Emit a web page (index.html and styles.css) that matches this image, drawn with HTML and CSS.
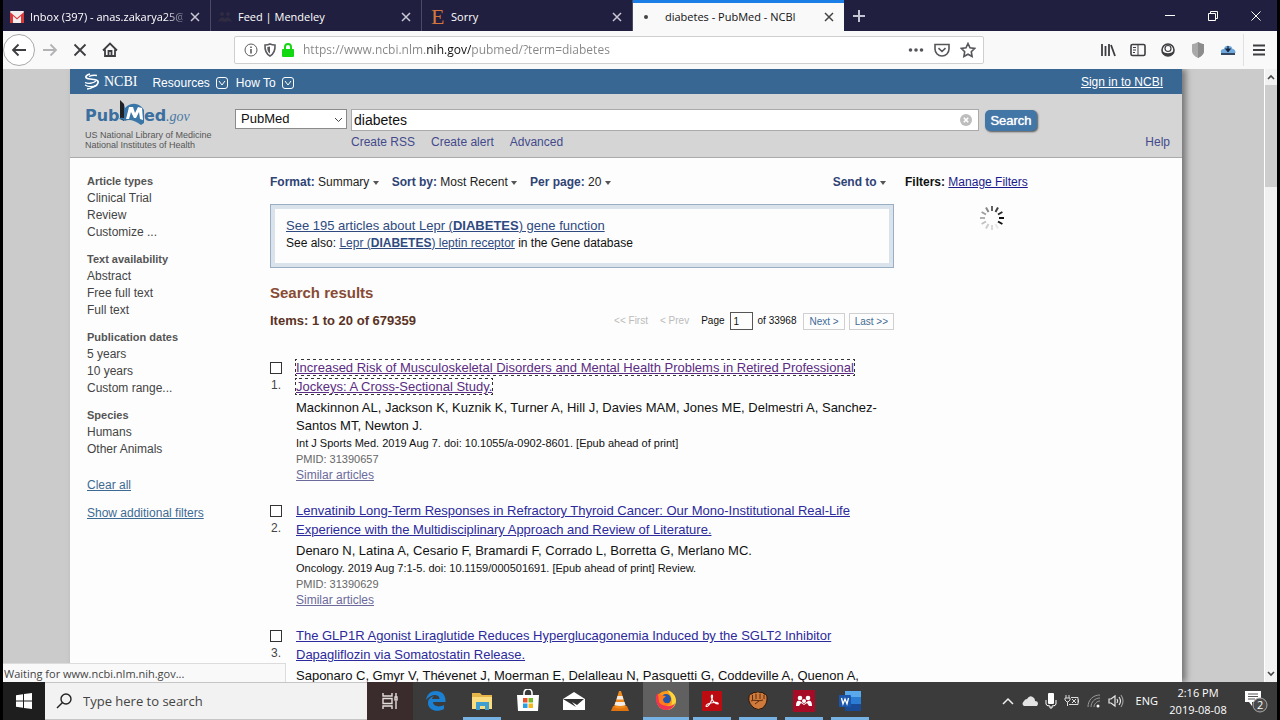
FILE: index.html
```html
<!DOCTYPE html>
<html lang="en">
<head>
<meta charset="utf-8">
<title>diabetes - PubMed - NCBI</title>
<link rel="stylesheet" href="styles.css">
</head>
<body>
<div class="desktop">
  <header class="tabs">
    <div class="tab">
      <svg class="tab-icon" width="14" height="12" viewBox="0 0 14 12"><rect width="14" height="12" rx="1" fill="#f3eeee"/><path d="M0 12V1l7 6 7-6v11h-3V5L7 8.500 3 5v7z" fill="#d8393b"/></svg>
      <span class="tab-title faded">Inbox (397) - anas.zakarya25@g</span>
      <button class="tab-close" aria-label="Close tab"><svg width="10" height="10" viewBox="0 0 10 10"><path d="M1 1l8 8M9 1L1 9"/></svg></button>
    </div>
    <div class="tab">
      <svg class="tab-icon" width="14" height="12" viewBox="0 0 14 12" fill="#2f2c42"><circle cx="4" cy="3" r="2"/><circle cx="10" cy="3" r="2"/><path d="M0 11c2-5 5-6 7-3 2-3 5-2 7 3l-3-1-4 1-4-1z"/></svg>
      <span class="tab-title">Feed | Mendeley</span>
      <button class="tab-close" aria-label="Close tab"><svg width="10" height="10" viewBox="0 0 10 10"><path d="M1 1l8 8M9 1L1 9"/></svg></button>
    </div>
    <div class="tab">
      <span class="etsy">E</span>
      <span class="tab-title">Sorry</span>
      <button class="tab-close" aria-label="Close tab"><svg width="10" height="10" viewBox="0 0 10 10"><path d="M1 1l8 8M9 1L1 9"/></svg></button>
    </div>
    <div class="tab active">
      <span class="loading-dot"></span>
      <span class="tab-title">diabetes - PubMed - NCBI</span>
      <button class="tab-close" aria-label="Close tab"><svg width="10" height="10" viewBox="0 0 10 10"><path d="M1 1l8 8M9 1L1 9"/></svg></button>
    </div>
    <button class="new-tab" aria-label="New tab"><svg width="14" height="14" viewBox="0 0 14 14"><path d="M7 1v12M1 7h12" stroke="#c4c3d2" stroke-width="2"/></svg></button>
    <div class="window-buttons">
      <button aria-label="Minimize"><svg width="12" height="12" viewBox="0 0 12 12"><path d="M1 5.500h10"/></svg></button>
      <button aria-label="Restore"><svg width="12" height="12" viewBox="0 0 12 12"><path d="M1.500 3.500h7v7h-7zM3.500 3.500v-2h7v7h-2"/></svg></button>
      <button aria-label="Close"><svg width="12" height="12" viewBox="0 0 12 12"><path d="M1.500 1.500l9 9M10.500 1.500l-9 9"/></svg></button>
    </div>
  </header>

  <nav class="toolbar">
    <button class="tool back" aria-label="Back"><svg width="16" height="16" viewBox="0 0 16 16"><path d="M15 8H2M7.500 2.500L2 8l5.500 5.500"/></svg></button>
    <button class="tool dim" aria-label="Forward"><svg width="16" height="16" viewBox="0 0 16 16"><path d="M1 8h13M8.500 2.500L14 8l-5.500 5.500"/></svg></button>
    <button class="tool" aria-label="Stop"><svg width="14" height="14" viewBox="0 0 14 14"><path d="M1.500 1.500l11 11M12.500 1.500l-11 11"/></svg></button>
    <button class="tool" aria-label="Home"><svg width="16" height="16" viewBox="0 0 16 16"><path d="M1 8.500l7-7 7 7M3 7.500V14h10V7.500M6.500 14V9h3v5"/></svg></button>
    <div class="urlbar">
      <svg width="14" height="14" viewBox="0 0 14 14" fill="none" stroke="#5c5c60"><circle cx="7" cy="7" r="6"/><path d="M7 6v4.500M7 3.500V5" stroke-width="1.600"/></svg>
      <svg width="14" height="14" viewBox="0 0 14 14" fill="none" stroke="#5c5c60" stroke-width="1.600"><path d="M2 2q3 0 5-1 2 1 5 1 .5 8-5 11Q1.500 10 2 2z"/><path d="M7 3.500v7C4.500 9 4.300 7 4.300 4z" fill="#5c5c60" stroke="none"/></svg>
      <svg width="12" height="14" viewBox="0 0 12 14"><path d="M3 7V4a3 3 0 0 1 6 0v3" fill="none" stroke="#16d616" stroke-width="2"/><rect y="6" width="12" height="8" rx="1" fill="#12d812"/></svg>
      <input class="url" type="text" aria-label="Address" value="https://www.ncbi.nlm.nih.gov/pubmed/?term=diabetes">
      <button aria-label="Page actions"><svg width="16" height="16" viewBox="0 0 16 16" fill="#55555a"><circle cx="2.500" cy="8" r="1.800"/><circle cx="8" cy="8" r="1.800"/><circle cx="13.500" cy="8" r="1.800"/></svg></button>
      <button aria-label="Save to Pocket"><svg width="16" height="16" viewBox="0 0 16 16" fill="none" stroke="#55555a" stroke-width="1.600"><path d="M1 2.500h14V7a7 7 0 0 1-14 0zM4.500 6.200L8 9.500l3.500-3.300"/></svg></button>
      <button aria-label="Bookmark"><svg width="16" height="16" viewBox="0 0 16 16" fill="none" stroke="#55555a" stroke-width="1.600"><path d="M8 1.500l2 4.300 4.700.6-3.400 3.300.8 4.800L8 12.200l-4.100 2.300.8-4.800L1.300 6.400 6 5.800z"/></svg></button>
    </div>
    <div class="extensions">
      <button class="tool" aria-label="Library"><svg width="16" height="16" viewBox="0 0 16 16"><path d="M2 2v12M5.500 4v10M9 2v12M11 3l4 11"/></svg></button>
      <button class="tool" aria-label="Sidebars"><svg width="16" height="16" viewBox="0 0 16 16"><rect x="1" y="2.500" width="14" height="11" rx="1.500" stroke-width="1.600"/><path d="M8 3v10M3 5.500h3M3 8h3M3 10.500h2" stroke-width="1"/></svg></button>
      <button class="tool" aria-label="Account"><svg width="16" height="16" viewBox="0 0 16 16"><circle cx="8" cy="8" r="6" stroke-width="1.600"/><path d="M2.500 9c0 3.500 2 5 5.500 5s5.500-1.500 5.500-5c-2.500 3-8.500 3-11 0z" fill="#3e3e42" stroke="none"/><circle cx="8" cy="6.500" r="3" fill="#f9f9fa" stroke-width="1.200"/></svg></button>
      <button class="tool" aria-label="Shield extension"><svg width="16" height="16" viewBox="0 0 16 16"><path d="M8 0q3 2 6 2.300V9q0 4-6 7-6-3-6-7V2.300Q5 2 8 0z" fill="#a9a9a9" stroke="none"/><path d="M8 0q3 2 6 2.300V9q0 4-6 7z" fill="#8c8c8c" stroke="none"/></svg></button>
      <button class="tool" aria-label="Download extension"><svg width="16" height="16" viewBox="0 0 16 16"><path d="M1 11q-1-4 3-4 1-4 5-3 3 0 3.500 3 3 0 3 4z" fill="#6ea8dc" stroke="none"/><path d="M1 12h14" stroke="#1d3450"/><path d="M8 4v4M6 7h4L8 9.500z" stroke="#14233a" stroke-width="1.200" fill="#14233a"/></svg></button>
      <span class="tool-separator"></span>
      <button class="tool" aria-label="Menu"><svg width="14" height="14" viewBox="0 0 14 14"><path d="M1 2.500h12M1 7h12M1 11.500h12"/></svg></button>
    </div>
  </nav>

  <div class="viewport">
    <main class="page">
      <div class="ncbi-bar">
        <a class="ncbi-brand" href="#"><svg width="16" height="17" viewBox="0 0 16 17" fill="none" stroke="#fff" stroke-width="1.700"><path d="M6 1C0 3 1 5.500 6 6s9 1 8 4-3 3-5 4"/><path d="M13 2.500C10 2 7 2.500 5 3.500M1 9.500c3 1.500 8 1 11-1.500M1 12c3 2 8 2 12 0M3 16c3 0 5-1 7-2.500" stroke-width="1.300"/></svg><span>NCBI</span></a>
        <a class="menu" href="#">Resources <svg width="12" height="12" viewBox="0 0 12 12"><rect x=".5" y=".5" width="11" height="11" rx="2.500"/><path d="M3 4l3 4 3-4"/></svg></a>
        <a class="menu" href="#">How To <svg width="12" height="12" viewBox="0 0 12 12"><rect x=".5" y=".5" width="11" height="11" rx="2.500"/><path d="M3 4l3 4 3-4"/></svg></a>
        <a class="sign-in" href="#">Sign in to NCBI</a>
      </div>

      <div class="search-header">
        <div class="brand">
          <svg class="logo" width="112" height="28" viewBox="0 0 112 28">
            <text class="logo-word" x="0" y="21">Pub</text>
            <path d="M35 0l4 4v17l-4-2z" fill="#202326"/>
            <path d="M39 4v14q-4-1-5 1 4 0 6 2 6-3 16 4l3-2V10q-3-5-8-6-6-1-11 4z" fill="#3a77a8"/>
            <path d="M41 19l3-12h4l2 6 3-6 4 1 1 12-3-1-1-7-3 6h-2l-3-6-2 7z" fill="#fff"/>
            <text class="logo-word" x="59" y="21">ed</text>
            <text class="logo-gov" x="81" y="21">.gov</text>
          </svg>
          <span>US National Library of Medicine</span>
          <span>National Institutes of Health</span>
        </div>
        <form class="search-form">
          <div class="search-row">
            <div class="database">
              <select aria-label="Database"><option>PubMed</option></select>
              <svg width="9" height="6" viewBox="0 0 9 6"><path d="M1 1l3.500 3.500L8 1" fill="none" stroke="#444"/></svg>
            </div>
            <div class="term">
              <input type="text" aria-label="Search term" value="diabetes">
              <button type="button" aria-label="Clear"><svg width="12" height="12" viewBox="0 0 12 12"><circle cx="6" cy="6" r="6" fill="#bdbdbd"/><path d="M3.800 3.800l4.400 4.400M8.200 3.800L3.800 8.200" stroke="#fff" stroke-width="1.600"/></svg></button>
            </div>
            <button class="search-button" type="button">Search</button>
          </div>
          <div class="search-links">
            <a href="#">Create RSS</a><a href="#">Create alert</a><a href="#">Advanced</a><a class="help" href="#">Help</a>
          </div>
        </form>
      </div>

      <div class="content">
        <aside class="filters">
          <section><h3>Article types</h3><a href="#">Clinical Trial</a><a href="#">Review</a><a href="#">Customize ...</a></section>
          <section><h3>Text availability</h3><a href="#">Abstract</a><a href="#">Free full text</a><a href="#">Full text</a></section>
          <section><h3>Publication dates</h3><a href="#">5 years</a><a href="#">10 years</a><a href="#">Custom range...</a></section>
          <section><h3>Species</h3><a href="#">Humans</a><a href="#">Other Animals</a></section>
          <a class="filter-action" href="#">Clear all</a>
          <a class="filter-action" href="#">Show additional filters</a>
        </aside>

        <div class="results">
          <div class="display-bar">
            <a href="#"><b>Format:</b> Summary <i class="caret"></i></a>
            <a href="#"><b>Sort by:</b> Most Recent <i class="caret"></i></a>
            <a href="#"><b>Per page:</b> 20 <i class="caret"></i></a>
            <a class="send" href="#"><b>Send to</b> <i class="caret"></i></a>
          </div>
          <div class="gene-box">
            <p class="gene-main"><a href="#">See 195 articles about Lepr (<b>DIABETES</b>) gene function</a></p>
            <p>See also: <a href="#">Lepr (<b>DIABETES</b>) leptin receptor</a> in the Gene database</p>
          </div>
          <h2>Search results</h2>
          <div class="count-row">
            <h3>Items: 1 to 20 of 679359</h3>
            <div class="pager">
              <span class="off">&lt;&lt; First</span>
              <span class="off">&lt; Prev</span>
              <label for="page">Page</label>
              <input id="page" type="text" value="1">
              <span class="total">of 33968</span>
              <a href="#">Next &gt;</a>
              <a href="#">Last &gt;&gt;</a>
            </div>
          </div>

          <article class="result">
            <div class="pick"><input id="r1" type="checkbox"><label for="r1">1.</label></div>
            <div class="citation">
              <p class="title"><a class="focused" href="#">Increased Risk of Musculoskeletal Disorders and Mental Health Problems in Retired Professional Jockeys: A Cross-Sectional Study.</a></p>
              <p class="authors">Mackinnon AL, Jackson K, Kuznik K, Turner A, Hill J, Davies MAM, Jones ME, Delmestri A, Sanchez-Santos MT, Newton J.</p>
              <p class="source">Int J Sports Med. 2019 Aug 7. doi: 10.1055/a-0902-8601. [Epub ahead of print]</p>
              <p class="pmid">PMID: 31390657</p>
              <p class="similar"><a href="#">Similar articles</a></p>
            </div>
          </article>
          <article class="result">
            <div class="pick"><input id="r2" type="checkbox"><label for="r2">2.</label></div>
            <div class="citation">
              <p class="title"><a href="#">Lenvatinib Long-Term Responses in Refractory Thyroid Cancer: Our Mono-Institutional Real-Life Experience with the Multidisciplinary Approach and Review of Literature.</a></p>
              <p class="authors">Denaro N, Latina A, Cesario F, Bramardi F, Corrado L, Borretta G, Merlano MC.</p>
              <p class="source">Oncology. 2019 Aug 7:1-5. doi: 10.1159/000501691. [Epub ahead of print] Review.</p>
              <p class="pmid">PMID: 31390629</p>
              <p class="similar"><a href="#">Similar articles</a></p>
            </div>
          </article>
          <article class="result">
            <div class="pick"><input id="r3" type="checkbox"><label for="r3">3.</label></div>
            <div class="citation">
              <p class="title"><a href="#">The GLP1R Agonist Liraglutide Reduces Hyperglucagonemia Induced by the SGLT2 Inhibitor Dapagliflozin via Somatostatin Release.</a></p>
              <p class="authors">Saponaro C, Gmyr V, Thévenet J, Moerman E, Delalleau N, Pasquetti G, Coddeville A, Quenon A,</p>
            </div>
          </article>
        </div>

        <aside class="side">
          <p><b>Filters:</b> <a href="#">Manage Filters</a></p>
          <svg class="spinner" width="26" height="26" viewBox="-13 -13 26 26" stroke-width="2" stroke="#111">
            <path d="M7 0h5" /><path d="M6 3.500l4.400 2.500"/><path d="M3.500 6l2.500 4.400" opacity=".08"/><path d="M0 7v5" opacity=".14"/><path d="M-3.500 6l-2.500 4.400" opacity=".2"/><path d="M-6 3.500l-4.400 2.500" opacity=".25"/><path d="M-7 0h-5" opacity=".32"/><path d="M-6-3.500l-4.400-2.500" opacity=".4"/><path d="M-3.500-6l-2.500-4.400" opacity=".5"/><path d="M0-7v-5" opacity=".65"/><path d="M3.500-6l2.500-4.400" opacity=".8"/><path d="M6-3.500l4.400-2.500" opacity=".9"/>
          </svg>
        </aside>
      </div>
    </main>
    <div class="scrollbar">
      <button aria-label="Scroll up"><svg width="8" height="6" viewBox="0 0 8 6"><path d="M1 5l3-3 3 3"/></svg></button>
      <div class="thumb"></div>
      <button class="down" aria-label="Scroll down"><svg width="8" height="6" viewBox="0 0 8 6"><path d="M1 1l3 3 3-3"/></svg></button>
    </div>
    <div class="status">Waiting for www.ncbi.nlm.nih.gov...</div>
  </div>

  <footer class="taskbar">
    <button class="start" aria-label="Start"><svg width="16" height="16" viewBox="0 0 16 16" fill="#fff"><path d="M0 2.200l7-1v6.300H0zM8 1l8-1v7.500H8zM0 8.500h7v6.300l-7-1zM8 8.500h8V16l-8-1z"/></svg></button>
    <label class="task-search">
      <svg width="16" height="16" viewBox="0 0 16 16" fill="none" stroke="#222" stroke-width="1.400"><circle cx="10" cy="6" r="5"/><path d="M6.500 9.500L1 15"/></svg>
      <input type="text" placeholder="Type here to search" aria-label="Type here to search">
    </label>
    <div class="apps">
      <button class="app task-view" aria-label="Task View"><svg width="18" height="18" viewBox="0 0 18 18" fill="none" stroke="#e4dede" stroke-width="1.400"><path d="M2 1v3h9V1M2 6.500h9v5H2zM2 17v-3h9v3M15 1v4M15 9v8"/><rect x="14" y="5" width="2" height="3"/></svg></button>
      <button class="app" aria-label="Edge"><svg width="22" height="22" viewBox="0 0 22 22"><path d="M1 10C2 4 6 1 11 1c6 0 10 4 9.500 11H8c0 4 6 6 11 3v4c-7 4-16 1-16-6 0-4 3-6 6-7-1 1-2 2-2 3h7.500c0-5-8-6-13.500 1z" fill="#1b80d2"/></svg></button>
      <button class="app running" aria-label="File Explorer"><svg width="22" height="22" viewBox="0 0 22 22"><path d="M1 3h8l2 2h10v14H1z" fill="#e7b64a"/><path d="M1 7h20v12H1z" fill="#fbdd80"/><path d="M5 20v-8h13v8h-4v-4H9v4z" fill="#3f9fd0"/></svg></button>
      <button class="app" aria-label="Store"><svg width="22" height="24" viewBox="0 0 22 24"><path d="M7 7V4a4 4 0 0 1 8 0v3" fill="none" stroke="#fff" stroke-width="1.600"/><path d="M0 6h22l-1 16H1z" fill="#fff"/><path d="M6 9h4.500v4.500H6z" fill="#e8532b"/><path d="M11.500 9H16v4.500h-4.500z" fill="#77b82a"/><path d="M6 14.500h4.500V19H6z" fill="#2b9fe6"/><path d="M11.500 14.500H16V19h-4.500z" fill="#f5b81c"/></svg></button>
      <button class="app" aria-label="Mail"><svg width="24" height="20" viewBox="0 0 24 20"><path d="M1 8L12 1l11 7v11H1z" fill="#fff"/><path d="M1 8h21l-7 6-5-3 4 5z" fill="#333"/></svg></button>
      <button class="app" aria-label="VLC"><svg width="20" height="22" viewBox="0 0 20 22"><path d="M3 16h14l2 5H1z" fill="#e27410"/><path d="M9 1h2l5 16q-6 3-12 0z" fill="#f08a1c"/><path d="M7.500 6h5l1 3.500h-7zM5.500 12h9l1 3q-5 2-11 0z" fill="#f2ece5"/></svg></button>
      <button class="app running current" aria-label="Firefox"><svg width="22" height="22" viewBox="0 0 22 22"><circle cx="11" cy="11.500" r="9.500" fill="#ff9a18"/><path d="M12 1c6 2 9 6 9 11 0 4-3 8-8 9 6-5 5-13-1-20z" fill="#ffd63a"/><path d="M1 7c-1 8 4 14 10 14 5 0 8-3 9-7-3 4-9 4-11 1L3 4z" fill="#ef3454"/><circle cx="11" cy="10" r="5" fill="#2455a8"/><path d="M3 5c3 0 5 2 8 2l-3 3c0 4 3 5 7 4-3 4-9 3-11-1z" fill="#ff7a1a"/></svg></button>
      <button class="app running" aria-label="Acrobat"><svg width="20" height="20" viewBox="0 0 20 20"><rect width="20" height="20" rx="1" fill="#bd0b12"/><path d="M10 4c-1 0-1 2 0 4 2 4 4 5 6 5 1-1-1-2-4-1.500-4 .5-8 2-8 3.500 1 2 4-2 5.500-5.500C10.500 7 11 4 10 4z" fill="none" stroke="#fff" stroke-width="1.100"/></svg></button>
      <button class="app running" aria-label="Fist"><svg width="22" height="20" viewBox="0 0 22 20"><path d="M2 6c0-3 2-3 3-3 1-2 3-2 4-1 1-2 3-1 4 0 1-1 3-1 4 1 3 0 3 3 3 5 0 5-3 7-4 9q-5 3-9 0C4 14 1 11 2 6z" fill="#cf7a3b" stroke="#2a150a"/><path d="M5.500 4v5M9 3v5M13 3v5M17 4v4M4 10c4-2 8 1 12-1M8 13l4-3" fill="none" stroke="#5a2c12"/></svg></button>
      <button class="app running" aria-label="Mendeley"><svg width="22" height="22" viewBox="0 0 22 22"><rect width="22" height="22" fill="#a70c27"/><g fill="#fff"><circle cx="7" cy="8" r="2.300"/><circle cx="15" cy="8" r="2.300"/><circle cx="11" cy="11" r="2"/><path d="M3 16c0-4 1-6 4-5l4 3 4-3c3-1 4 1 4 5h-3l-2-3-3 2-3-2-2 3z"/></g></svg></button>
      <button class="app running" aria-label="Word"><svg width="22" height="20" viewBox="0 0 22 20"><rect x="6" width="16" height="20" rx="1" fill="#2b7cd3"/><path d="M6 0h16v6H6z" fill="#59a9ec"/><path d="M6 13h16v7H6z" fill="#1a4b96"/><rect y="4" width="12" height="12" rx="1" fill="#1b56ad"/><path d="M2.500 7l1.500 6 2-5 2 5 1.500-6" fill="none" stroke="#fff" stroke-width="1.300"/></svg></button>
    </div>
    <div class="tray">
      <svg width="14" height="10" viewBox="0 0 14 10" fill="none" stroke="#eee" stroke-width="1.500"><path d="M2 8l5-5 5 5"/></svg>
      <svg width="16" height="12" viewBox="0 0 16 12"><path d="M2 11q-3-2 0-5 1-2 3-2 3-5 7-1 1 1 1 3 3 0 3 3l-1 2z" fill="#e3e3e3"/></svg>
      <svg width="12" height="16" viewBox="0 0 12 16" fill="#fff"><rect x="3" width="6" height="11" rx="1"/><path d="M1 7v4q0 2 4 2v2h2v-2q4 0 4-2V7" fill="none" stroke="#fff"/></svg>
      <svg width="16" height="12" viewBox="0 0 16 12" fill="none" stroke="#ddd"><path d="M2 0v3M5 0v3M1 3h5v2L4 7H3L1 5zM3.500 7v4M7 2.500h7v7H5M14.500 4.500v3M8 4l4 4M12 4L8 8"/></svg>
      <svg width="14" height="14" viewBox="0 0 14 14" fill="none" stroke="#999"><path d="M1 13C1 6 6 1 13 1M4 13c0-5 4-9 9-9M7 13c0-3 3-6 6-6"/><circle cx="11" cy="12" r="1.500" fill="#fff" stroke="none"/></svg>
      <svg width="16" height="14" viewBox="0 0 16 14" fill="none" stroke="#e8e8e8" stroke-width="1.200"><path d="M1 5h2l4-3v10L3 9H1zM9 5q1.500 2 0 4M11 3q3 4 0 8"/><path d="M13 1q4 6 0 12" stroke="#999"/></svg>
      <span class="lang">ENG</span>
      <div class="clock"><span>2:16 PM</span><span>2019-08-08</span></div>
      <div class="notices"><svg width="24" height="24" viewBox="0 0 24 24"><path d="M1 2h16v11h-9v4l-3-4H1z" fill="#fff"/><path d="M4 5h10M4 7.500h10M4 10h7" stroke="#555"/><circle cx="16" cy="16" r="7" fill="#4a4a4a" stroke="#aaa"/></svg><span>2</span></div>
    </div>
  </footer>
</div>
</body>
</html>
```
FILE: styles.css
```css
* { box-sizing: border-box; }
body, p, h2, h3 { margin: 0; }
body { background: #000; color: #111; font: 12px/16px "Liberation Sans", Arial, sans-serif; }
button, input, select { font: inherit; color: inherit; margin: 0; padding: 0; border: 0; background: none; border-radius: 0; }
button { display: inline-flex; align-items: center; justify-content: center; }
svg { display: block; flex: none; }

.desktop { display: flex; flex-direction: column; height: 100vh; padding: 0 3px; overflow: hidden; }

/* Browser tabs */
.tabs { display: flex; flex: none; height: 31px; background: #211f40; color: #fff; font: 11px/16px "Open Sans", "Noto Sans", sans-serif; }
.tab { display: flex; align-items: center; gap: 4px; flex: 0 1 211px; min-width: 0; padding: 3px 7px 0 6px; border-right: 1px solid #4b4964; }
.tab:first-child { flex-basis: 208px; }
.tab-icon { margin: 0 2px 0 1px; }
.tab-title { flex: 1; min-width: 0; white-space: nowrap; }
.tab-title.faded { mask-image: linear-gradient(to right, #000 88%, transparent 105%); }
.tab-close { width: 16px; height: 18px; }
.tab-close path { stroke: #c9c8d4; stroke-width: 1.500; }
.tab.active { padding-top: 0; border-top: 3px solid #1a7ee6; border-right: 0; background: #f9f9fa; color: #111; }
.tab.active .tab-close path { stroke: #444; }
.tab.active .tab-title { padding-left: 8px; }
.etsy { width: 14px; margin: 0 2px 0 3px; color: #d2763e; font: 22px/22px "Liberation Serif", serif; }
.loading-dot { width: 4px; height: 4px; margin: 0 5px; border-radius: 50%; background: #444; }
.new-tab { width: 30px; }
.window-buttons { display: flex; margin-left: auto; }
.window-buttons button { width: 43px; }
.window-buttons path { fill: none; stroke: #fff; }

/* Navigation toolbar */
.toolbar { display: flex; align-items: center; flex: none; height: 38px; background: #f9f9fa; }
.tool { width: 30px; height: 30px; }
.tool svg { fill: none; stroke: #3e3e42; stroke-width: 1.800; }
.tool.back { width: 32px; height: 32px; border: 1px solid #a9a9ac; border-radius: 50%; background: #fff; }
.tool.dim svg { stroke: #b3b3b6; }
.urlbar { display: flex; align-items: center; gap: 5px; flex: 1; height: 28px; margin: 0 109px; padding: 0 5px 0 9px; border: 1px solid #cfcfd1; border-radius: 2px; background: #fff; }
.url { flex: 1; min-width: 0; margin-left: 4px; font: 12px/20px "Open Sans", "Noto Sans", sans-serif; color: transparent; background: linear-gradient(to right, #858585 124px, #111 124px, #111 168px, #858585 168px); background-clip: text; -webkit-background-clip: text; }
.urlbar button { width: 21px; height: 22px; }
.extensions { display: flex; align-items: center; margin-right: 3px; }
.tool-separator { width: 1px; height: 32px; background: #e0e0e2; }

/* Browser viewport */
.viewport { position: relative; display: flex; flex: 1; min-height: 0; overflow: hidden; background: #cbcbcb; }
.page { flex: 1; min-width: 0; margin: 0 82px 0 67px; background: #fdfdfd; box-shadow: 4px 0 6px #777; }
.scrollbar { display: flex; flex-direction: column; flex: none; width: 13px; border-left: 1px solid #fff; background: #f1f1f1; }
.scrollbar button { height: 16px; }
.scrollbar path { fill: none; stroke: #444; stroke-width: 1.600; }
.thumb { height: 102px; background: #cdcdcd; }
.scrollbar .down { margin-top: auto; }
.status { position: absolute; left: 0; bottom: 0; width: 283px; height: 19px; padding-left: 1px; border: solid #dcdcdc; border-width: 1px 1px 0 0; background: #f9f9fa; color: #444; font: 11px/19px "Open Sans", "Noto Sans", sans-serif; }

/* NCBI bar */
.ncbi-bar { display: flex; align-items: center; height: 25px; padding: 0 19px 0 14px; background: #386794; color: #fff; }
.ncbi-bar a { color: #fff; text-decoration: none; }
.ncbi-brand { display: flex; align-items: center; gap: 4px; margin-right: 15px; font: 14px/20px "Liberation Serif", serif; }
.menu { display: flex; align-items: center; gap: 6px; margin: 2px 8px 0 0; }
.menu svg { fill: none; stroke: #fff; }
.ncbi-bar .sign-in { margin-left: auto; text-decoration: underline; }

/* Search header */
.search-header { display: flex; height: 64px; padding: 6px 12px 0 15px; border-bottom: 1px solid #aaa; background: #d5d5d5; }
.brand { display: flex; flex-direction: column; width: 150px; color: #555; font-size: 9px; line-height: 10px; }
.logo-word { fill: #3a6fa0; font: bold 16px "DejaVu Sans", sans-serif; }
.logo-gov { fill: #4a78a4; font: italic 14px "Liberation Serif", serif; }
.brand .logo { margin-bottom: 2px; }
.search-form { flex: 1; min-width: 0; padding-top: 9px; }
.search-row { display: flex; gap: 4px; margin-right: 133px; }
.database { position: relative; width: 112px; height: 20px; }
.database select { width: 100%; height: 20px; padding-left: 5px; border: 1px solid #8b8b8b; background: #fff; font-size: 13px; appearance: none; }
.database svg { position: absolute; right: 4px; top: 8px; pointer-events: none; }
.term { display: flex; align-items: center; flex: 1; height: 22px; padding: 0 6px 0 2px; border: 1px solid #aaa; background: #fff; }
.term input { flex: 1; min-width: 0; font-size: 14px; }
.search-button { width: 52px; height: 21px; margin: 1px 0 0 2px; border-radius: 5px; background: #4276a6; box-shadow: 1px 1px 2px #555; color: #fff; font-size: 13px; text-shadow: 0 0 1px #fff; }
.search-links { display: flex; gap: 16px; margin-top: 3px; padding-left: 116px; }
.search-links a { color: #434a8c; text-decoration: none; }
.search-links .help { margin-left: auto; }

/* Three-column content */
.content { display: grid; grid-template-columns: 172px minmax(0, 1fr) 277px; column-gap: 11px; padding: 15px 0 0 17px; }
.filters { display: flex; flex-direction: column; }
.filters section { display: flex; flex-direction: column; margin-bottom: 10px; line-height: 17px; }
.filters h3 { color: #555; font-size: 11px; line-height: 17px; }
.filters section a { color: #444; text-decoration: none; }
.filter-action { margin: 9px 0 3px; color: #3d6a92; }

.display-bar { display: flex; gap: 13px; padding-top: 1px; }
.display-bar a { color: #222; text-decoration: none; }
.display-bar b { color: #2f4375; }
.display-bar .send { margin-left: auto; margin-right: 8px; }
.caret { display: inline-block; border: 3px solid transparent; border-top: 4px solid #555; border-bottom: 0; vertical-align: 1px; }
.gene-box { height: 64px; margin-top: 14px; padding: 11px 15px; border: 1px solid #9aaec3; box-shadow: inset 0 0 0 4px #dae3eb; }
.gene-box a { color: #2f4a80; }
.gene-box .gene-main { font-size: 13px; line-height: 19px; }
.results h2 { margin-top: 15px; color: #884a34; font-size: 15px; line-height: 20px; }
.count-row { display: flex; align-items: center; justify-content: space-between; margin-top: 8px; }
.count-row h3 { color: #5a3324; font-size: 13px; line-height: 16px; }
.pager { display: flex; align-items: center; padding-top: 1px; font-size: 10px; }
.pager .off { margin-right: 12px; color: #bbb; }
.pager input { width: 23px; height: 18px; margin: 0 5px; padding-left: 3px; border: 1px solid #555; }
.pager a { margin-left: 4px; padding: 0 5px; border: 1px solid #d0d0d0; color: #3f6c94; line-height: 15px; text-decoration: none; }
.pager .total { margin-right: 3px; }

.result { display: flex; margin-top: 18px; }
.count-row + .result { margin-top: 28px; }
.pick { display: flex; flex-direction: column; width: 26px; color: #444; }
.pick input { width: 12px; height: 12px; margin: 4px 0 3px; border: 1px solid #333; background: #fff; appearance: none; }
.pick label { padding-left: 1px; }
.citation { flex: 1; min-width: 0; }
.title { padding-right: 20px; font-size: 13px; line-height: 19px; }
.title a { color: #2c2a9c; }
.title .focused { color: #5a2c82; outline: 1px dotted #333; }
.authors { margin-top: 3px; font-size: 13px; line-height: 18px; }
.source { font-size: 11px; }
.pmid { color: #666; font-size: 11px; line-height: 17px; }
.similar { line-height: 15px; }
.similar a { color: #6b6a9a; }

.side { padding-top: 1px; }
.side a { color: #1a1a8c; }
.spinner { margin: 15px 0 0 74px; }

/* Taskbar */
.taskbar { display: flex; flex: none; height: 38px; background: #3b3b3b; color: #fff; font: 12px/16px "Open Sans", "Noto Sans", sans-serif; }
.start { width: 42px; background: #1e1e1e; }
.task-search { display: flex; align-items: center; gap: 11px; width: 322px; padding-left: 11px; border: solid #c6c6c6; border-width: 1px 0; background: #f2f2f2; }
.task-search input { flex: 1; min-width: 0; font-size: 13px; }
.task-search input::placeholder { color: #444; opacity: 1; }
.apps { display: flex; }
.app { width: 46px; height: 38px; }
.task-view { background: #3a2c2d; }
.running { background: linear-gradient(#76b2e4, #76b2e4) center bottom / 38px 3px no-repeat; }
.current { border-bottom: 3px solid #76b2e4; background: #606060; }
.tray { display: flex; align-items: center; gap: 7px; margin-left: auto; }
.lang { margin-left: 5px; font-size: 11px; }
.clock { display: flex; flex-direction: column; width: 66px; align-items: center; line-height: 17px; font-size: 11px; }
.notices { position: relative; margin: 0 9px 0 6px; }
.notices span { position: absolute; left: 13px; top: 8px; font-size: 11px; }
```
